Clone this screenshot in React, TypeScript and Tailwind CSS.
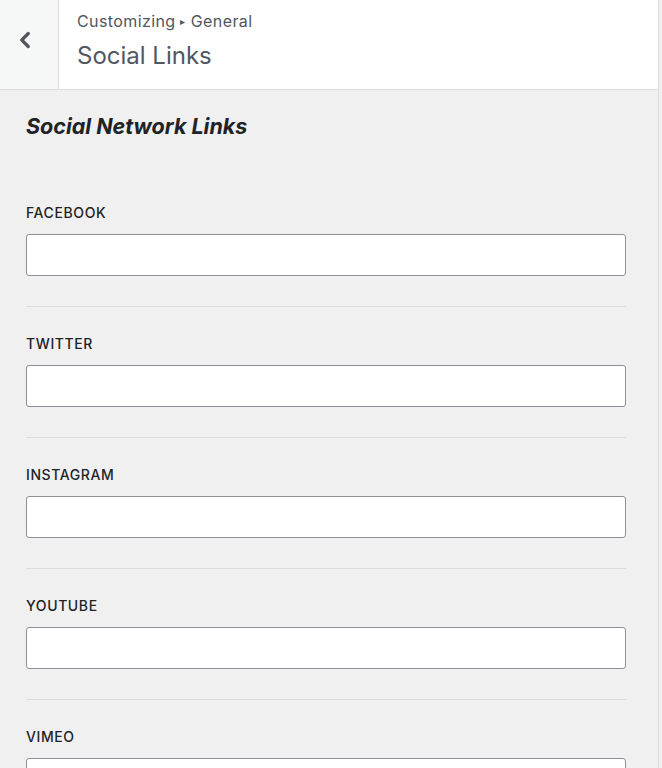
import { ChevronLeft } from 'lucide-react';

const fields = ['FACEBOOK', 'TWITTER', 'INSTAGRAM', 'YOUTUBE', 'VIMEO'];

export default function App() {
  return (
    <div className="h-[768px] overflow-hidden bg-[#f0f0f1] font-['Inter','Noto_Sans',sans-serif]">
      <div className="w-[659px] h-full border-r border-[#dcdcde] bg-[#f0f0f1]">
        {/* Header */}
        <div className="flex h-[90px] bg-white border-b border-[#dcdcde]">
          <button className="w-[59px] shrink-0 flex items-center justify-center bg-[#f6f7f7] border-r border-[#dcdcde] text-[#50575e]">
            <ChevronLeft className="w-[26px] h-[26px] -mt-[9px] -ml-[9px]" strokeWidth={3} />
          </button>
          <div className="pl-[18px] pt-[10px]">
            <div className="text-[16px] leading-[22px] tracking-[0.4px] text-[#50575e]">
              Customizing <span className="text-[10px] align-[2px]">▸</span> General
            </div>
            <h1 className="mt-[8px] text-[24px] leading-[32px] text-[#50575e]">Social Links</h1>
          </div>
        </div>

        {/* Section */}
        <div className="pl-[26px] pr-[32px] pt-[21px]">
          <h2 className="text-[21.5px] leading-[30px] font-bold italic text-[#1d2327]">Social Network Links</h2>
          <div className="mt-[63px]">
            {fields.map((name) => (
              <div key={name}>
                <label className="block text-[14px] leading-[18px] tracking-[0.6px] font-medium text-[#1d2327] mb-[12px]">{name}</label>
                <input
                  type="text"
                  className="block w-full h-[42px] bg-white border border-[#8c8f94] rounded-[3px] px-2 outline-none"
                />
                <div className="mt-[30px] mb-[28px] border-t border-[#dcdcde]" />
              </div>
            ))}
          </div>
        </div>
      </div>
    </div>
  );
}
